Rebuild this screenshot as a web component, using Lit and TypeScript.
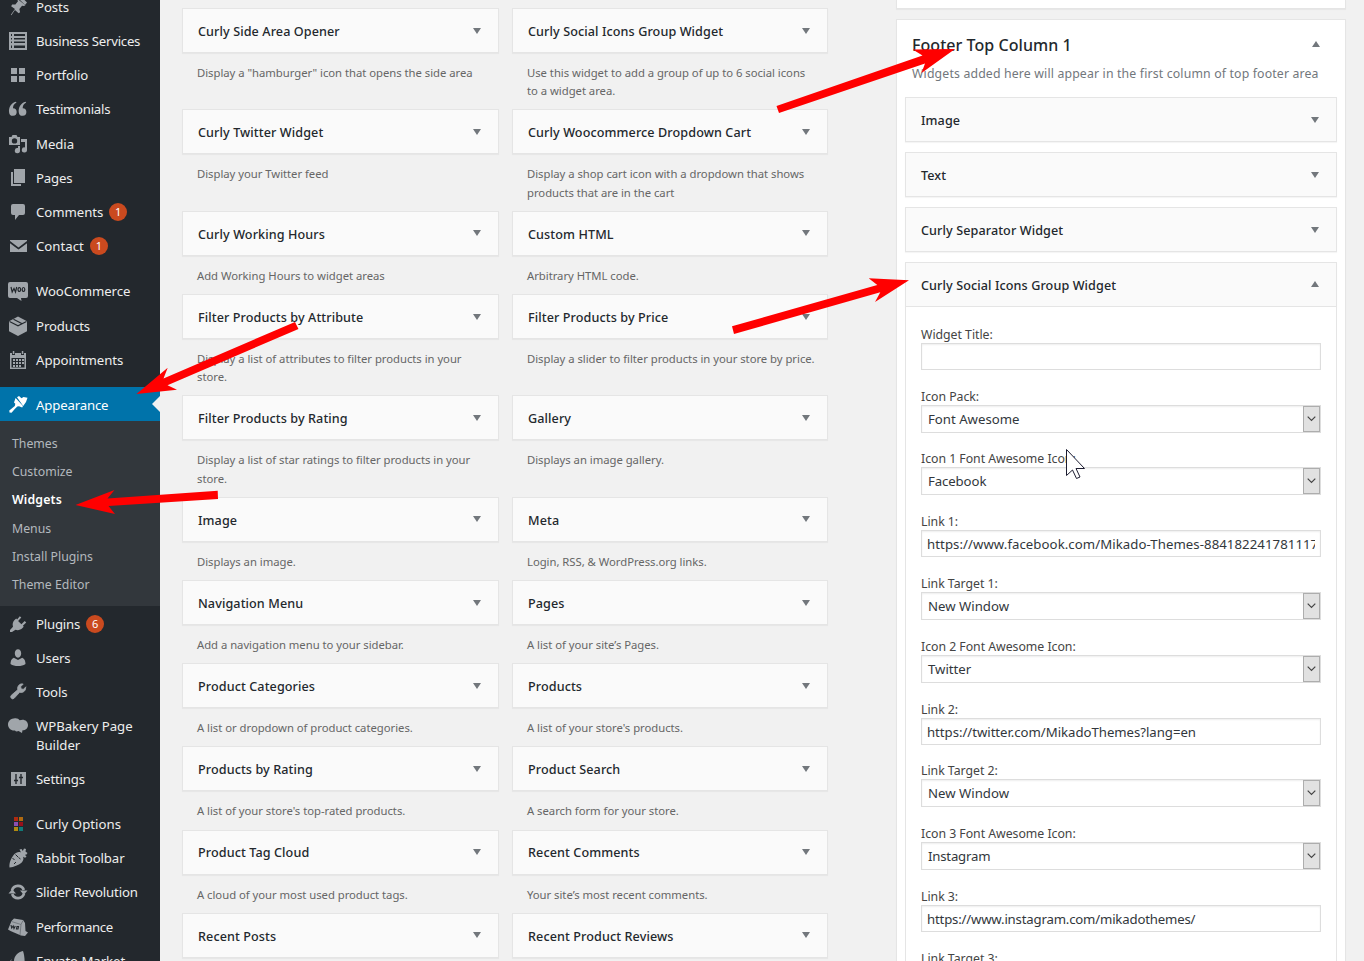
import { LitElement, html, css, svg } from "lit";
import { customElement, property } from "lit/decorators.js";

const icons: Record<string, unknown> = {
  pin: svg`<path d="M10.4 3 17 9.600l-1.500.6-1.900-.6-3 3 .4 3.200-1.600 1-3.300-3.700L2 18l-.5-.5 4.700-5.300L2.700 9l1.200-1.700 3.200.5 2.900-3L9.700 3.600z" transform="translate(0.500 -0.500) rotate(-6 10 10)"/><path d="m11.500 2.500 5.500 5.500 2-2.500L14.500 1z"/>`,
  list: svg`<path fill-rule="evenodd" d="M1 1h18v18H1zM3 3v2h1V3zm3 0v2h11V3zM3 7v1.500h1V7zm3 0v1.500h11V7zM3 10.500V12h1v-1.500zm3 0V12h11v-1.500zM3 14.500V17h1v-2.500zm3 0V17h11v-2.500z"/>`,
  grid: svg`<path d="M3 3h6v6H3zM11 3h6v6h-6zM3 11h6v6H3zM11 11h6v6h-6z"/>`,
  quote: svg`<path d="M8.500 3.400C5.800 4.800 4.900 7 5 9.200a3.800 3.800 0 1 1-3.900 4.200C.4 8.700 3 3.900 7.900 2.700zM18.200 3.400C15.500 4.800 14.600 7 14.700 9.200a3.800 3.800 0 1 1-3.900 4.200C10.100 8.700 12.700 3.900 17.600 2.700z"/>`,
  media: svg`<path fill-rule="evenodd" d="M1 3h2.500l1-2h4l1 2H12v8H1zm5.500 1.200a2.700 2.700 0 1 0 0 5.400 2.700 2.700 0 0 0 0-5.400zM13 5h6v10.800a2.600 2.600 0 1 1-2-2.400V8h-4zM12 12v4.500a2.600 2.600 0 1 1-2-2.400V12z"/>`,
  pages: svg`<path d="M6 1h11v14H6zM3 4h2v12h8v2H3z"/>`,
  comment: svg`<path d="M5 2h10a2 2 0 0 1 2 2v7a2 2 0 0 1-2 2h-4l-4 5v-5H5a2 2 0 0 1-2-2V4a2 2 0 0 1 2-2z"/>`,
  mail: svg`<path d="M2 4h17v1L10.500 11.500 2 5zM2 7.200l5 3.900 3.500 2.400 3.500-2.400 5-3.900V16H2z"/>`,
  woo: svg`<path d="M2 1h16a2 2 0 0 1 2 2v12a2 2 0 0 1-2 2h-5l.5 3-4.500-3H2a2 2 0 0 1-2-2V3a2 2 0 0 1 2-2z"/><path d="m3 6 1.200 5L6 7.500 7.500 11 8.700 6M10 8.500a1.300 2 0 1 0 2.600 0 1.300 2 0 1 0-2.600 0M14.200 8.500a1.300 2 0 1 0 2.600 0 1.300 2 0 1 0-2.600 0" fill="none" stroke="#23282d" stroke-width="1.200"/>`,
  box: svg`<path d="m10 .5 9 4.700v10L10 20l-9-4.800v-10z"/><path d="m1.500 5.500 8.500 4.300 8.500-4.300M5.500 3.200l8.700 4.500" fill="none" stroke="#23282d" stroke-width="1.100"/>`,
  calendar: svg`<path fill-rule="evenodd" d="M2 3h2v2h3V3h6v2h3V3h2v16H2zM3.500 8v9.500h13V8z"/><path d="M4.800 1h1.500v3H4.800zM13.800 1h1.500v3h-1.500zM5 9h2v2H5zM8 9h2v2H8zM11 9h2v2h-2zM14 9h2v2h-2zM5 12h2v2H5zM8 12h2v2H8zM11 12h2v2h-2zM14 12h2v2h-2zM5 15h2v2H5zM8 15h2v2H8zM11 15h2v2h-2z"/>`,
  brush: svg`<path d="M9 2.300 11 1l2.500 2.200L15.500 2l4 .8L18 7l-2.800 4z"/><path d="M7.600 3 15 11l-.8 1.400-3.200-1.200-1.700.3-2.500 2.500-3.300 3.800-2-.3-.2-2L6.800 11l.5-2.200L6 7.500z"/>`,
  plug: svg`<path d="m11.800 2.200 1.500 1.400-3.200 3.300 3.300 3.300 3.300-3.300 1.500 1.500-3.300 3.300.8 1-1.200 1.300c-2 2-4.500 2.600-7 1.800L4 18H2v-2l3-3.200c-.8-2.600-.2-5 1.800-7l1.400-1.300.9.900z"/>`,
  user: svg`<path d="M10 1.200c2 0 3.200 1.700 3.200 4S12 9.700 10 9.700 6.800 7.500 6.800 5.200 8 1.200 10 1.200zM5.800 9.700 10 12l4.200-2.300C16.500 10.500 17.500 13 17.500 16c-2 1.500-4.500 2-7.500 2s-5.500-.5-7.500-2c0-3 1-5.500 3.300-6.300z"/>`,
  wrench: svg`<path d="M16.700 6.500a4.600 4.600 0 0 1-6 4.800L5.200 17.200a2 2 0 1 1-2.900-2.900L8.700 8.800A4.600 4.600 0 0 1 14.200 3l-2.500 2.700.5 2.200 2.200.4 2.500-2.500z" stroke="#a0a5aa" stroke-width=".8" transform="translate(1 -1)"/>`,
  bakery: svg`<path d="M7 2.200c2.200-.2 3.700.7 4.700 2C16 2.500 20 5 20 9c0 3.500-3 5.500-5.500 5.300L14 17l-3.500-2c-1.500.8-3 .5-3.500-.5C3 15 0 12 0 8.500 0 5 3 2.200 7 2.200z"/>`,
  sliders: svg`<path d="M3 3h15v14H3z"/><path d="M8 5v10M6 11.500h4M13 5v10M11 8.500h4" stroke="#23282d" stroke-width="1.400"/>`,
  squares: svg`<path fill="#b02a10" d="M6 3h4v4H6z"/><path fill="#b06a10" d="M11 3h4v4h-4z"/><path fill="#8a50b0" d="M6 8h4v4H6z"/><path fill="#98101a" d="M11 8h4v4h-4z"/><path fill="#b08a10" d="M6 13h4v4H6z"/><path fill="#107a78" d="M11 13h4v4h-4z"/>`,
  carrot: svg`<path d="M13 4.500 11.500 1.500l2-.5 1.300 2L16 .5l2 .5-.5 2.500 2 1.500-1 1.500-1.500.2 1.500 2-1.500 1-2-1c1 2 .3 4-1.500 6C10.500 17 6 19 1.500 19.500 1 15 3 10 6 6.500c2-2 4.500-3 7-2z"/><path d="m7.500 6.500 2.500 2.500M4.500 10l2 2M12.500 11l-2-1.500M6 16l2-2" stroke="#23282d" stroke-width="1"/>`,
  refresh: svg`<path d="M4 8.500A6.200 6.200 0 0 1 15.800 8M16 11.500A6.200 6.200 0 0 1 4.200 12" fill="none" stroke="#a0a5aa" stroke-width="2.800"/><path d="M12 8.500h7.500l-3.700 4.300zM.5 11.500H8L4.200 7.200z"/>`,
  cube: svg`<path d="M6 1.500 15 3l2 3 .5 8 2.500 1.500L17 19l-4-.5L2.500 14 0 12.500 3.500 4z"/><path d="m3.500 4.500 9.500 3 2-4M13 7.500 12 18" fill="none" stroke="#686e73" stroke-width=".8"/><path d="m3 8 .7 3 1.500-2 .8 2.500 1.300-2.500M9 9.500h1.500L10 12H8.500z" fill="none" stroke="#23282d" stroke-width="1.100"/>`,
  leaf: svg`<path d="M15 0c-5 1-9 5-9 10 0 5 2 9 7 9s4-14 2-19zM4 8c-2 3-2 7 1 10L3 17C1 14 1 10 4 8z"/>`,
};

interface MenuEntry { icon: string; label: string; track?: number; count?: number; gap?: boolean; active?: boolean }

const MENU_TOP: MenuEntry[] = [
  { icon: "pin", label: "Posts" },
  { icon: "list", label: "Business Services", track: -0.25 },
  { icon: "grid", label: "Portfolio", track: -0.15 },
  { icon: "quote", label: "Testimonials", track: -0.26 },
  { icon: "media", label: "Media" },
  { icon: "pages", label: "Pages", track: -0.15 },
  { icon: "comment", label: "Comments", count: 1 },
  { icon: "mail", label: "Contact", count: 1, track: 0.02 },
  { icon: "woo", label: "WooCommerce", gap: true, track: -0.1 },
  { icon: "box", label: "Products", track: -0.1 },
  { icon: "calendar", label: "Appointments" },
  { icon: "brush", label: "Appearance", gap: true, active: true, track: -0.16 },
];
const SUBMENU = ["Themes", "Customize", "Widgets", "Menus", "Install Plugins", "Theme Editor"];
const MENU_BOTTOM: MenuEntry[] = [
  { icon: "plug", label: "Plugins", count: 6, track: -0.2 },
  { icon: "user", label: "Users", track: -0.15 },
  { icon: "wrench", label: "Tools", track: -0.15 },
  { icon: "bakery", label: "WPBakery Page Builder" },
  { icon: "sliders", label: "Settings", track: -0.15 },
  { icon: "squares", label: "Curly Options", gap: true, track: 0.05 },
  { icon: "carrot", label: "Rabbit Toolbar", track: -0.12 },
  { icon: "refresh", label: "Slider Revolution", track: -0.15 },
  { icon: "cube", label: "Performance", track: -0.32 },
  { icon: "leaf", label: "Envato Market" },
];

const AVAILABLE: [string, string][] = [
  ["Curly Side Area Opener", 'Display a "hamburger" icon that opens the side area'],
  ["Curly Social Icons Group Widget", "Use this widget to add a group of up to 6 social icons\nto a widget area."],
  ["Curly Twitter Widget", "Display your Twitter feed"],
  ["Curly Woocommerce Dropdown Cart", "Display a shop cart icon with a dropdown that shows\nproducts that are in the cart"],
  ["Curly Working Hours", "Add Working Hours to widget areas"],
  ["Custom HTML", "Arbitrary HTML code."],
  ["Filter Products by Attribute", "Display a list of attributes to filter products in your\nstore."],
  ["Filter Products by Price", "Display a slider to filter products in your store by price."],
  ["Filter Products by Rating", "Display a list of star ratings to filter products in your\nstore."],
  ["Gallery", "Displays an image gallery."],
  ["Image", "Displays an image."],
  ["Meta", "Login, RSS, & WordPress.org links."],
  ["Navigation Menu", "Add a navigation menu to your sidebar."],
  ["Pages", "A list of your site\u2019s Pages."],
  ["Product Categories", "A list or dropdown of product categories."],
  ["Products", "A list of your store's products."],
  ["Products by Rating", "A list of your store's top-rated products."],
  ["Product Search", "A search form for your store."],
  ["Product Tag Cloud", "A cloud of your most used product tags."],
  ["Recent Comments", "Your site\u2019s most recent comments."],
  ["Recent Posts", ""],
  ["Recent Product Reviews", ""],
];

interface Field { label: string; value: string; select?: boolean; track?: number }
const FIELDS: Field[] = [
  { label: "Widget Title:", value: "" },
  { label: "Icon Pack:", value: "Font Awesome", select: true },
  { label: "Icon 1 Font Awesome Icon:", value: "Facebook", select: true, track: -0.1 },
  { label: "Link 1:", value: "https://www.facebook.com/Mikado-Themes-884182241781117", track: 0.07 },
  { label: "Link Target 1:", value: "New Window", select: true },
  { label: "Icon 2 Font Awesome Icon:", value: "Twitter", select: true },
  { label: "Link 2:", value: "https://twitter.com/MikadoThemes?lang=en", track: -0.03 },
  { label: "Link Target 2:", value: "New Window", select: true },
  { label: "Icon 3 Font Awesome Icon:", value: "Instagram", select: true, track: -0.2 },
  { label: "Link 3:", value: "https://www.instagram.com/mikadothemes/", track: -0.18 },
  { label: "Link Target 3:", value: "New Window", select: true },
];

@customElement("admin-menu")
class AdminMenu extends LitElement {
  static styles = css`
    :host { display: block; width: 160px; flex: none; background: #23282d; overflow: hidden; }
    .menu { margin-top: -11.2px; }
    .item { display: flex; align-items: flex-start; color: #eee; font-size: 13.2px; line-height: 18.2px; }
    .gap { margin-top: 11px; }
    .icon { width: 36px; flex: none; padding: 8px 0 0 8px; box-sizing: border-box; height: 34px; }
    .icon svg { display: block; width: 20px; height: 20px; fill: #a0a5aa; }
    .label { padding: 9px 0 7px; width: 112px; white-space: nowrap; display: flex; }
    .wrap { white-space: normal; }
    .active { background: #0073aa; color: #fff; position: relative; }
    .active .icon svg { fill: #fff; }
    .active::after { content: ""; position: absolute; right: 0; top: 9px; border: 8px solid transparent; border-right-color: #f1f1f1; border-left: 0; }
    .count { margin: 0 0 -1px 6px; background: #ca4a1f; color: #fff; width: 18px; height: 18px; border-radius: 9px; font-size: 11px; line-height: 18px; text-align: center; letter-spacing: 0; }
    .sub { background: #32373c; padding: 8.800px 0 6.600px; color: #b4b9be; font-size: 12.300px; line-height: 18.2px; }
    .sub div { padding: 5px 12px; }
    .sub .current { color: #fff; font-weight: 600; letter-spacing: .15px; }
  `;
  private entry(e: MenuEntry) {
    return html`<div class="item ${e.gap ? "gap" : ""} ${e.active ? "active" : ""}">
      <div class="icon"><svg viewBox="0 0 20 20">${icons[e.icon]}</svg></div>
      <div class="label ${e.icon === "bakery" ? "wrap" : ""}"><span style="letter-spacing:${e.track ?? -0.05}px">${e.label}</span>${e.count ? html`<span class="count">${e.count}</span>` : ""}</div>
    </div>`;
  }
  render() {
    return html`<div class="menu">
      ${MENU_TOP.map((e) => this.entry(e))}
      <div class="sub">${SUBMENU.map((s) => html`<div class=${s === "Widgets" ? "current" : ""}>${s}</div>`)}</div>
      ${MENU_BOTTOM.map((e) => this.entry(e))}
    </div>`;
  }
}

@customElement("widget-bar")
class WidgetBar extends LitElement {
  @property() name = "";
  @property({ type: Boolean }) open = false;
  static styles = css`
    :host { display: block; }
    .bar { box-sizing: border-box; height: 45px; border: 1px solid #e5e5e5; background: #fafafa; box-shadow: 0 1px 1px rgba(0, 0, 0, .04); display: flex; align-items: center; justify-content: space-between; padding: 0 17px 0 15px; color: #23282d; font-weight: 500; font-size: 12.600px; letter-spacing: .1px; line-height: 18px; white-space: nowrap; }
    .name { padding-top: 2.400px; }
    .mark { width: 0; border: 4.500px solid transparent; border-top: 6.500px solid #72777c; border-bottom: 0; }
    .up { border-top: 0; border-bottom: 6.500px solid #72777c; margin-bottom: 1px; }
  `;
  render() {
    return html`<div class="bar"><span class="name">${this.name}</span><span class="mark ${this.open ? "up" : ""}"></span></div>`;
  }
}

@customElement("widget-form")
class WidgetForm extends LitElement {
  static styles = css`
    :host { display: block; border: 1px solid #e5e5e5; border-top: 0; background: #fff; padding: 18px 15px 0; color: #444; }
    .label { font-size: 12.300px; letter-spacing: -.03px; line-height: 19.600px; height: 18px; white-space: nowrap; }
    .control { box-sizing: border-box; border: 1px solid #ddd; height: 27px; margin-bottom: 16.700px; padding: 0 5px; background: #fff; box-shadow: inset 0 1px 2px rgba(0, 0, 0, .07); color: #32373c; font-size: 13.200px; line-height: 26px; }
    .text { overflow: hidden; white-space: nowrap; }
    .select { height: 28px; margin-bottom: 16.800px; padding: 0 0 0 6px; display: flex; justify-content: space-between; line-height: 27.600px; }
    .drop { width: 17px; box-sizing: border-box; border: 1px solid #adadad; background: #e1e1e1; display: flex; align-items: center; justify-content: center; }
  `;
  render() {
    return FIELDS.map((f) => html`<div class="label">${f.label}</div>
      ${f.select
        ? html`<div class="control select"><span style="letter-spacing:${f.track ?? 0}px">${f.value}</span><span class="drop"><svg width="9" height="6" viewBox="0 0 9 6"><path d="m.7.7 3.800 3.800L8.300.7" fill="none" stroke="#444" stroke-width="1.200"/></svg></span></div>`
        : html`<div class="control"><div class="text" style="letter-spacing:${f.track ?? 0}px">${f.value}</div></div>`}`);
  }
}

@customElement("app-root")
class AppRoot extends LitElement {
  static styles = css`
    :host { display: flex; position: relative; width: 1364px; height: 961px; overflow: hidden; background: #f1f1f1; font-family: "Noto Sans", sans-serif; }
    .available { width: 646px; margin-left: 22px; padding-top: 8px; display: grid; grid-template-columns: 317px 316px; column-gap: 13px; align-content: start; flex: none; }
    .desc { padding: 11px 0 9px 15px; font-size: 11.300px; letter-spacing: -.03px; line-height: 18.200px; color: #666; white-space: pre; }
    .areas { width: 450px; margin-left: 68px; flex: none; }
    .area { box-sizing: border-box; border: 1px solid #e5e5e5; background: #fff; box-shadow: 0 1px 1px rgba(0, 0, 0, .04); }
    .previous { height: 9px; border-top: 0; margin-bottom: 10px; }
    .current { height: 1000px; padding: 0 8px; }
    .head { display: flex; justify-content: space-between; align-items: center; padding: 12px 17px 0 7px; height: 38px; box-sizing: border-box; color: #23282d; font-size: 16px; letter-spacing: .05px; font-weight: 500; }
    .mark { border: 4.500px solid transparent; border-top: 0; border-bottom: 6.500px solid #72777c; margin-bottom: 2px; }
    .about { padding: 7px 0 0 7px; height: 39px; box-sizing: border-box; font-size: 12.300px; letter-spacing: .15px; line-height: 18px; color: #72777c; white-space: nowrap; }
    .stack { display: flex; flex-direction: column; gap: 10px; }
    .marks { position: absolute; inset: 0; pointer-events: none; }
  `;
  render() {
    return html`
      <admin-menu></admin-menu>
      <div class="available">
        ${AVAILABLE.map(([name, about]) => html`<div><widget-bar name=${name}></widget-bar><div class="desc">${about}</div></div>`)}
      </div>
      <div class="areas">
        <div class="area previous"></div>
        <div class="area current">
          <div class="head"><span>Footer Top Column 1</span><span class="mark"></span></div>
          <div class="about">Widgets added here will appear in the first column of top footer area</div>
          <div class="stack">
            <widget-bar name="Image"></widget-bar>
            <widget-bar name="Text"></widget-bar>
            <widget-bar name="Curly Separator Widget"></widget-bar>
            <div><widget-bar name="Curly Social Icons Group Widget" open></widget-bar><widget-form></widget-form></div>
          </div>
        </div>
      </div>
      <svg class="marks" width="1364" height="961" viewBox="0 0 1364 961">
        <g fill="#f00">
          <path d="M776.500 106 922.500 55.500 912.700 49.500 955 49 921.500 73 925 63.500 779 113z"/>
          <path d="M732 326.300 877.300 285 868.700 278.300 909 280.300 875 302 880.300 292.300 734 334z"/>
          <path d="M217.700 490.700 107.500 498.500 114.500 490 75.500 505 115 514 108.500 506 218 499z"/>
          <path d="M295 322 163.500 378.500 167.700 367.700 136.500 394 177 389.700 167.500 385.300 298.500 329z"/>
        </g>
        <path d="M1066.500 449.500v26l6-5.500 4 8.500 3.500-1.500-4-8.500h8.500z" fill="#fff" stroke="#1c1c30" stroke-width="1"/>
      </svg>`;
  }
}
